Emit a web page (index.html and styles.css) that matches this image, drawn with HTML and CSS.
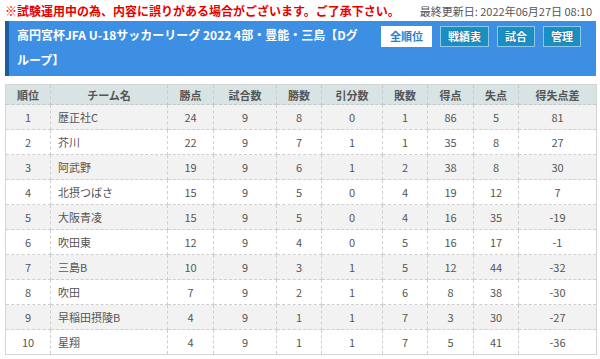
FILE: index.html
```html
<!DOCTYPE html>
<html lang="ja">
<head>
<meta charset="utf-8">
<title>順位表</title>
<link rel="stylesheet" href="styles.css">
</head>
<body>
<div class="page">
  <div class="topline">
    <span class="notice">※試験運用中の為、内容に誤りがある場合がございます。ご了承下さい。</span>
    <span class="updated">最終更新日: 2022年06月27日 08:10</span>
  </div>
  <div class="header">
    <h1 class="title">高円宮杯JFA U-18サッカーリーグ 2022 4部・豊能・三島【Dグループ】</h1>
    <div class="tabs">
      <a class="tab active">全順位</a>
      <a class="tab">戦績表</a>
      <a class="tab">試合</a>
      <a class="tab">管理</a>
    </div>
  </div>
  <table class="standings">
    <colgroup>
      <col class="c1"><col class="c2"><col class="c3"><col class="c4"><col class="c5">
      <col class="c6"><col class="c7"><col class="c8"><col class="c9"><col class="c10">
    </colgroup>
    <thead>
      <tr><th>順位</th><th>チーム名</th><th>勝点</th><th>試合数</th><th>勝数</th><th>引分数</th><th>敗数</th><th>得点</th><th>失点</th><th>得失点差</th></tr>
    </thead>
    <tbody>
      <tr><td>1</td><td class="team">歴正社C</td><td>24</td><td>9</td><td>8</td><td>0</td><td>1</td><td>86</td><td>5</td><td>81</td></tr>
      <tr><td>2</td><td class="team">芥川</td><td>22</td><td>9</td><td>7</td><td>1</td><td>1</td><td>35</td><td>8</td><td>27</td></tr>
      <tr><td>3</td><td class="team">阿武野</td><td>19</td><td>9</td><td>6</td><td>1</td><td>2</td><td>38</td><td>8</td><td>30</td></tr>
      <tr><td>4</td><td class="team">北摂つばさ</td><td>15</td><td>9</td><td>5</td><td>0</td><td>4</td><td>19</td><td>12</td><td>7</td></tr>
      <tr><td>5</td><td class="team">大阪青凌</td><td>15</td><td>9</td><td>5</td><td>0</td><td>4</td><td>16</td><td>35</td><td>-19</td></tr>
      <tr><td>6</td><td class="team">吹田東</td><td>12</td><td>9</td><td>4</td><td>0</td><td>5</td><td>16</td><td>17</td><td>-1</td></tr>
      <tr><td>7</td><td class="team">三島B</td><td>10</td><td>9</td><td>3</td><td>1</td><td>5</td><td>12</td><td>44</td><td>-32</td></tr>
      <tr><td>8</td><td class="team">吹田</td><td>7</td><td>9</td><td>2</td><td>1</td><td>6</td><td>8</td><td>38</td><td>-30</td></tr>
      <tr><td>9</td><td class="team">早稲田摂陵B</td><td>4</td><td>9</td><td>1</td><td>1</td><td>7</td><td>3</td><td>30</td><td>-27</td></tr>
      <tr><td>10</td><td class="team">星翔</td><td>4</td><td>9</td><td>1</td><td>1</td><td>7</td><td>5</td><td>41</td><td>-36</td></tr>
    </tbody>
  </table>
</div>
</body>
</html>
```
FILE: styles.css
```css
* { box-sizing: border-box; }
html, body { margin: 0; padding: 0; background: #fff; }
body {
  font-family: "Noto Sans CJK JP", "Noto Sans", sans-serif;
  color: #555;
}
.page { padding: 0 4px 0 5px; }
.topline {
  display: flex;
  justify-content: space-between;
  align-items: center;
  height: 21px;
  padding-right: 4px;
}
.notice {
  color: #e60000;
  font-weight: bold;
  font-size: 12px;
  line-height: 16px;
}
.updated {
  color: #555;
  font-size: 11px;
  line-height: 16px;
}
.header {
  display: flex;
  align-items: flex-start;
  background: #3d8fe3;
  border-left: 4px solid #1b5c9e;
  height: 55px;
  padding: 1px 15px 0 8px;
}
.title {
  flex: 1;
  margin: 0;
  color: #fff;
  font-size: 12px;
  font-weight: bold;
  line-height: 25px;
  padding-right: 14px;
}
.tabs {
  display: flex;
  gap: 8px;
  padding-top: 4px;
}
.tab {
  display: block;
  height: 21px;
  line-height: 19px;
  padding: 0 7px;
  font-size: 11px;
  font-weight: bold;
  color: #fff;
  background: #1a8fc4;
  border: 1px solid #8fc8e6;
  text-shadow: 0 0 2px rgba(0,0,0,0.35);
}
.tab.active {
  background: #fff;
  color: #2b7fd0;
  border-color: #fff;
  text-shadow: none;
  padding: 0 8px;
}
.standings {
  margin-top: 8px;
  width: 591px;
  border-collapse: collapse;
  table-layout: fixed;
  border: 1px solid #d5d5d5;
  font-size: 11px;
}
.c1 { width: 45px; }
.c2 { width: 117px; }
.c3 { width: 46px; }
.c4 { width: 63px; }
.c5 { width: 45px; }
.c6 { width: 61px; }
.c7 { width: 45px; }
.c8 { width: 46px; }
.c9 { width: 45px; }
.c10 { width: 78px; }
.standings th {
  background: #d8e3e3;
  color: #555;
  font-weight: bold;
  height: 20px;
  border: 1px dashed #c8c8c8;
  border-top: 1px solid #d5d5d5;
  padding: 0;
}
.standings td {
  height: 25px;
  text-align: center;
  border: 1px dashed #cfcfcf;
  padding: 0;
  color: #555;
}
.standings td.team { text-align: left; padding-left: 7px; }
.standings tbody tr:nth-child(odd) td { background: #f2f2f2; }
.standings tbody tr:nth-child(even) td { background: #fff; }
```
